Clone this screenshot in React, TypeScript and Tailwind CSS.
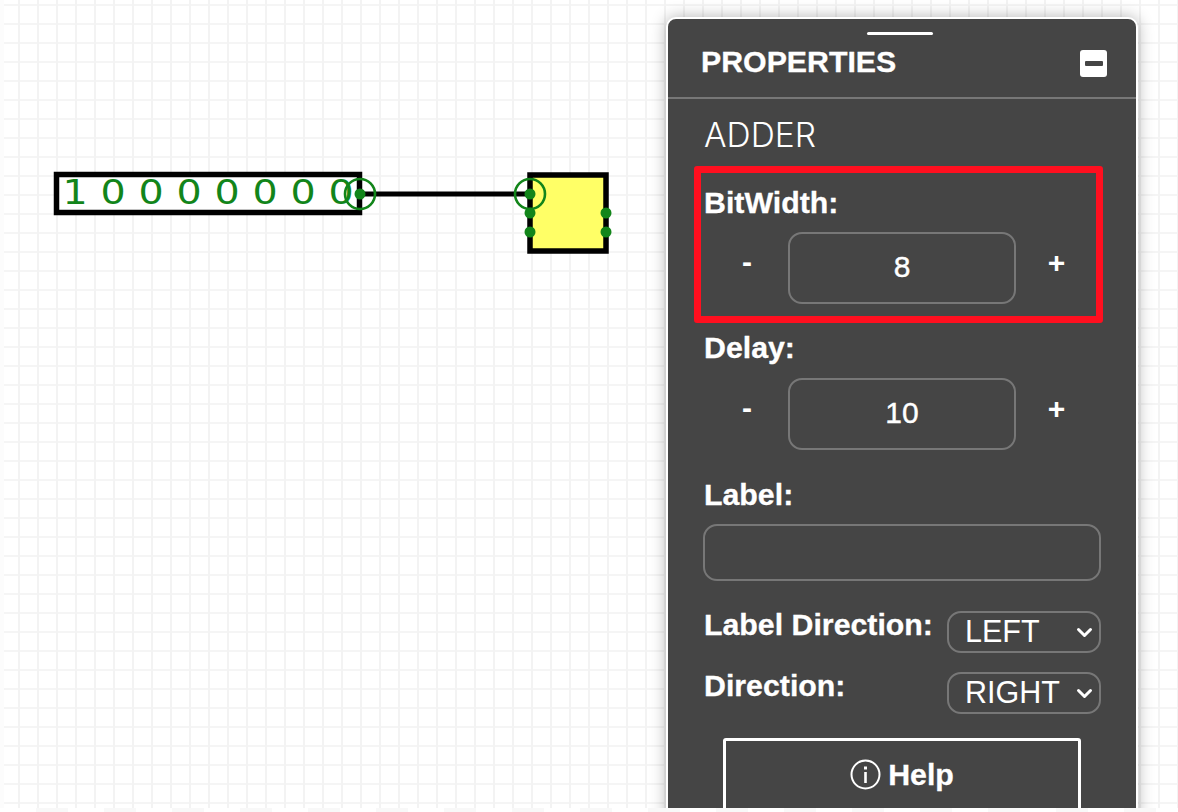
import React from "react";

const GREEN = "#12851a";
const digits = ["1", "0", "0", "0", "0", "0", "0", "0"];

function Circuit() {
  return (
    <svg className="absolute left-0 top-0" width="700" height="300" viewBox="0 0 700 300">
      <rect x="56.5" y="174.5" width="303" height="38" fill="#ffffff" stroke="#000" strokeWidth="5.5" />
      {digits.map((d, i) => (
        <text
          key={i}
          x={0}
          y={204}
          transform={`translate(${75 + i * 38} 0) scale(1.2 1)`}
          textAnchor="middle"
          fontFamily="'DejaVu Sans', sans-serif"
          fontSize="33"
          fill={GREEN}
        >
          {d}
        </text>
      ))}
      <line x1="360" y1="194" x2="530" y2="194" stroke="#000" strokeWidth="5" />
      <rect x="530" y="175" width="76" height="76" fill="#ffff66" stroke="#000" strokeWidth="5.5" />
      <circle cx="360" cy="194" r="15" fill="none" stroke={GREEN} strokeWidth="2.6" />
      <circle cx="360" cy="194" r="5.5" fill={GREEN} />
      <circle cx="530" cy="194" r="15" fill="none" stroke={GREEN} strokeWidth="2.6" />
      {[[530, 194], [530, 213], [530, 232], [606, 213], [606, 232]].map(([x, y]) => (
        <circle key={`${x}-${y}`} cx={x} cy={y} r="5.5" fill={GREEN} />
      ))}
    </svg>
  );
}

function Stepper({ value }: { value: string }) {
  return (
    <div className="flex h-[72px] items-center">
      <span className="w-[84px] pb-[12px] pl-[2px] text-center text-[30px] font-bold leading-none">-</span>
      <div className="flex h-[72px] w-[228px] items-center justify-center rounded-[14px] border-2 border-[#777777] pb-[2px] text-[30px] leading-none [-webkit-text-stroke:0.4px_#ffffff]">
        {value}
      </div>
      <span className="w-[82px] pb-[10px] pr-[1px] text-center text-[30px] font-bold leading-none">+</span>
    </div>
  );
}

function Select({ value }: { value: string }) {
  return (
    <div className="flex h-[42px] w-[154px] items-center justify-between rounded-[14px] border-2 border-[#777777] pl-[16px] pr-[6px] text-[30.5px] leading-none">
      <span className="pb-[2px]">{value}</span>
      <svg className="shrink-0" width="17" height="11" viewBox="0 0 17 11" fill="none" stroke="#ffffff" strokeWidth="3" strokeLinecap="round" strokeLinejoin="round">
        <path d="M2.5 2.5l6 6 6-6" />
      </svg>
    </div>
  );
}

const label = "text-[30.3px] font-bold leading-[36px] [-webkit-text-stroke:0.3px_#ffffff]";

function Panel() {
  return (
    <div className="absolute left-[666px] top-[17px] h-[830px] w-[472px] rounded-[10px] border-2 border-white bg-[#454545] font-['Liberation_Sans',Arial,sans-serif] text-white shadow-[0_0_16px_rgba(0,0,0,0.3)]">
      <div className="relative flex h-[80px] items-start justify-between border-b-2 border-[#777777] pl-[33px] pr-[29px]">
        <div className="absolute left-[199px] top-[13px] h-[3px] w-[66px] rounded-full bg-white" />
        <span className="mt-[26px] text-[30.3px] font-bold leading-[34px] [-webkit-text-stroke:0.3px_#ffffff]">PROPERTIES</span>
        <div className="mt-[31px] flex h-[27px] w-[27px] items-center justify-center rounded-[3px] bg-white">
          <div className="h-[5px] w-[18px] rounded-[1px] bg-[#454545]" />
        </div>
      </div>

      <div className="pl-[36px]">
        <div className="mt-[18px] font-['Inter',sans-serif] text-[33.5px] font-light leading-[36px]">ADDER</div>

        <div className={`mt-[32px] ${label}`}>BitWidth:</div>
        <div className="mt-[11px]"><Stepper value="8" /></div>

        <div className={`mt-[26px] ${label}`}>Delay:</div>
        <div className="mt-[12px]"><Stepper value="10" /></div>

        <div className={`mt-[27px] ${label}`}>Label:</div>
        <div className="-ml-[1px] mt-[11px] h-[57px] w-[398px] rounded-[14px] border-2 border-[#777777]" />

        <div className="mt-[30px] flex w-[397px] items-start justify-between">
          <span className={`-mt-[4px] ${label}`}>Label Direction:</span>
          <Select value="LEFT" />
        </div>
        <div className="mt-[19px] flex w-[397px] items-start justify-between">
          <span className={`-mt-[4px] ${label}`}>Direction:</span>
          <Select value="RIGHT" />
        </div>

        <div className="ml-[19px] mt-[24px] flex h-[110px] w-[358px] items-start justify-center gap-[7px] rounded-[3px] border-[3px] border-white pt-[17px]">
          <svg className="mt-[1px]" width="31" height="31" viewBox="0 0 31 31" fill="none" stroke="#ffffff">
            <circle cx="15.5" cy="15.5" r="14" strokeWidth="2" />
            <path d="M15.5 13v11" strokeWidth="2.6" />
            <path d="M15.5 7.5v3" strokeWidth="3" />
          </svg>
          <span className="text-[30.3px] font-bold leading-[34px] [-webkit-text-stroke:0.3px_#ffffff]">Help</span>
        </div>
      </div>
    </div>
  );
}

export default function App() {
  return (
    <div className="relative h-[812px] w-[1178px] overflow-hidden bg-white">
      <div className="absolute inset-0 bg-[linear-gradient(to_right,#f3f3f3_2px,transparent_2px),linear-gradient(to_bottom,#f5f5f5_2px,transparent_2px)] bg-[length:19px_19px] bg-[position:18px_4px]" />
      <div className="absolute bottom-0 left-0 top-0 w-[4px] bg-[#fcfcfc]" />
      <Circuit />
      <Panel />
      <div className="absolute left-[694px] top-[166px] h-[157px] w-[409px] rounded-[3px] border-[7px] border-[#ff0f1f]" />
      <div className="absolute bottom-0 left-0 h-[4px] w-full bg-[repeating-linear-gradient(to_right,#ffffff_0,#ffffff_36px,#f8f8f8_36px,#f8f8f8_68px)]" />
    </div>
  );
}
